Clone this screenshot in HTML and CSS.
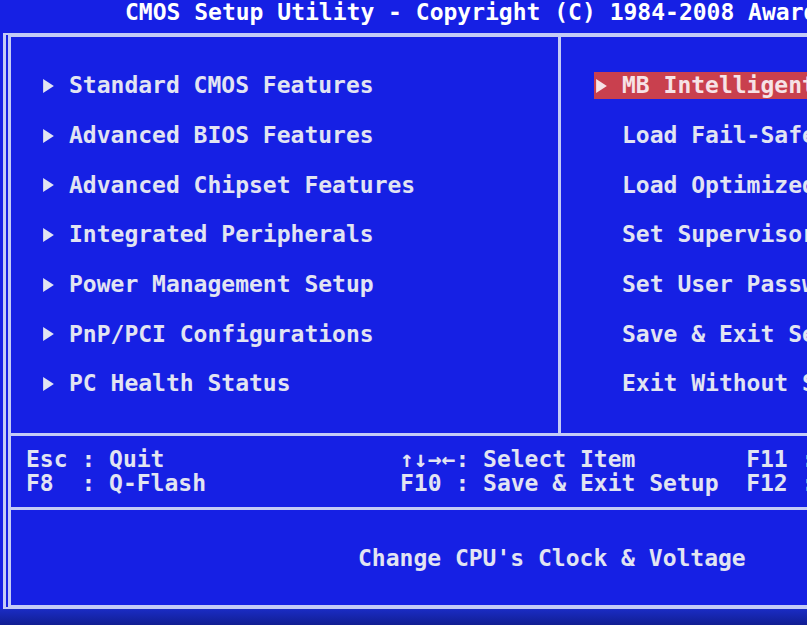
FILE: index.html
```html
<!DOCTYPE html>
<html lang="en">
<head>
    <meta charset="UTF-8" />
    <title>CMOS Setup Utility</title>
    <link rel="stylesheet" href="styles.css">
</head>
<body>
<div class="screen">

    <div class="title">CMOS Setup Utility - Copyright (C) 1984-2008 Award Software</div>

    <div class="frame">
        <div class="menus">
            <ul class="col col-left">
                <li><span class="item"><span class="mark"><svg class="tri" viewBox="0 0 10 13"><path d="M0 0L10 6.5L0 13Z"/></svg></span>Standard CMOS Features</span></li>
                <li><span class="item"><span class="mark"><svg class="tri" viewBox="0 0 10 13"><path d="M0 0L10 6.5L0 13Z"/></svg></span>Advanced BIOS Features</span></li>
                <li><span class="item"><span class="mark"><svg class="tri" viewBox="0 0 10 13"><path d="M0 0L10 6.5L0 13Z"/></svg></span>Advanced Chipset Features</span></li>
                <li><span class="item"><span class="mark"><svg class="tri" viewBox="0 0 10 13"><path d="M0 0L10 6.5L0 13Z"/></svg></span>Integrated Peripherals</span></li>
                <li><span class="item"><span class="mark"><svg class="tri" viewBox="0 0 10 13"><path d="M0 0L10 6.5L0 13Z"/></svg></span>Power Management Setup</span></li>
                <li><span class="item"><span class="mark"><svg class="tri" viewBox="0 0 10 13"><path d="M0 0L10 6.5L0 13Z"/></svg></span>PnP/PCI Configurations</span></li>
                <li><span class="item"><span class="mark"><svg class="tri" viewBox="0 0 10 13"><path d="M0 0L10 6.5L0 13Z"/></svg></span>PC Health Status</span></li>
            </ul>
            <ul class="col col-right">
                <li><span class="item sel"><span class="mark"><svg class="tri" viewBox="0 0 10 13"><path d="M0 0L10 6.5L0 13Z"/></svg></span>MB Intelligent Tweaker(M.I.T.)</span></li>
                <li><span class="item"><span class="mark"></span>Load Fail-Safe Defaults</span></li>
                <li><span class="item"><span class="mark"></span>Load Optimized Defaults</span></li>
                <li><span class="item"><span class="mark"></span>Set Supervisor Password</span></li>
                <li><span class="item"><span class="mark"></span>Set User Password</span></li>
                <li><span class="item"><span class="mark"></span>Save &amp; Exit Setup</span></li>
                <li><span class="item"><span class="mark"></span>Exit Without Saving</span></li>
            </ul>
        </div>

        <div class="keys">
            <div class="key">Esc : Quit</div>
            <div class="key">↑↓→←: Select Item        F11 : Save CMOS to BIOS</div>
            <div class="key">F8  : Q-Flash</div>
            <div class="key">F10 : Save &amp; Exit Setup  F12 : Load CMOS from BIOS</div>
        </div>

        <div class="help">Change CPU's Clock &amp; Voltage</div>
    </div>

    <div class="shade"></div>
</div>
</body>
</html>
```

FILE: styles.css
```css
body {
    margin: 0;
    background-color: #1620e4;
    font-family: "DejaVu Sans Mono", "Liberation Mono", monospace;
    font-weight: bold;
    font-size: 23px;
    color: #e2e4f2;
    overflow: hidden;
}

.screen {
    width: 807px;
    height: 625px;
    overflow: hidden;
}

.title {
    height: 33px;
    line-height: 24px;
    padding-left: 125px;
    color: #ffffff;
    white-space: nowrap;
    box-sizing: border-box;
}

.frame {
    margin-left: 3px;
    width: 1200px;
    border-top: 4px solid #c4cbf6;
    border-bottom: 4px solid #c4cbf6;
    border-left: 8px double #c4cbf6;
}

.menus {
    display: grid;
    grid-template-columns: 550px 1fr;
    height: 399px;
    box-sizing: border-box;
    border-bottom: 3px solid #c4cbf6;
}

.col {
    list-style: none;
    margin: 0;
    padding: 24px 0 0 0;
}

.col-left {
    padding-left: 30px;
    border-right: 3px solid #c4cbf6;
}

.col-right {
    padding-left: 33px;
}

.col li {
    height: 49.7px;
    display: flex;
    align-items: center;
    white-space: nowrap;
}

.item {
    display: inline-flex;
    align-items: center;
    line-height: 27px;
    padding-right: 4px;
}

.item.sel {
    background-color: #c9404e;
    color: #f6e3e6;
}

.mark {
    display: inline-flex;
    align-items: center;
    flex-shrink: 0;
    width: 28px;
    padding-left: 2px;
    box-sizing: border-box;
}

.tri {
    flex-shrink: 0;
    width: 11px;
    height: 14px;
    fill: currentColor;
}

.keys {
    display: grid;
    grid-template-columns: 374px auto;
    padding: 10.5px 0 10.5px 15px;
    line-height: 24.85px;
    border-bottom: 3px solid #c4cbf6;
}

.key {
    white-space: pre;
}

.help {
    height: 95px;
    box-sizing: border-box;
    padding: 36px 0 0 347px;
    line-height: 24.85px;
    white-space: nowrap;
}

.shade {
    height: 20px;
    background: linear-gradient(#1a2cc4, #0f1a86);
}
```
